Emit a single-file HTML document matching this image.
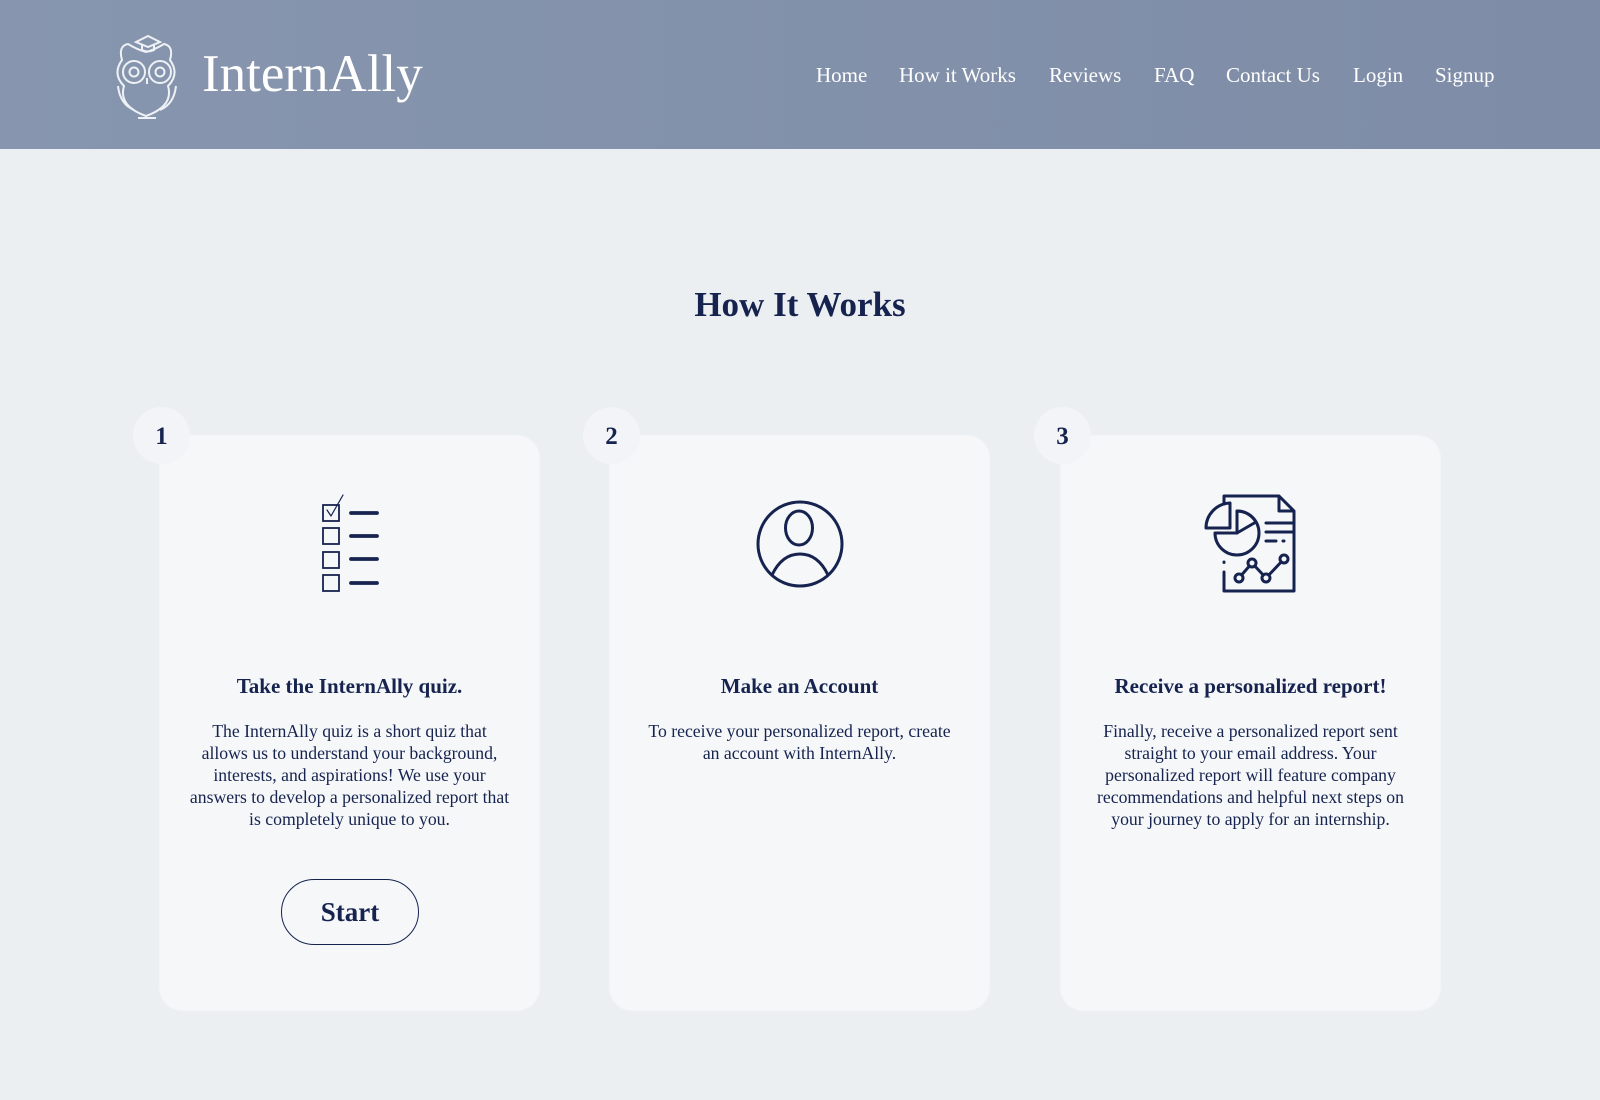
<!DOCTYPE html>
<html><head><style>
body{margin:0;width:1600px;height:1100px;background:#eceff2;font-family:"Liberation Serif",serif;color:#16234f;overflow:hidden;position:relative}
.hdr{position:absolute;left:0;top:0;width:1600px;height:149px;background:linear-gradient(90deg,#8796ae,#7e8ca7)}
.logo{position:absolute;left:202px;top:44px;font-size:53px;color:#fff}
.nav{position:absolute;top:63px;font-size:21px;color:#fff}
h1{position:absolute;left:0;width:1600px;top:285px;margin:0;text-align:center;font-size:35px;font-weight:bold}
.card{position:absolute;top:436px;height:574px;width:379px;background:#f5f7f9;border-radius:22px;box-shadow:0 0 2px rgba(255,255,255,.9);text-align:center}
.num{position:absolute;top:407px;width:57px;height:57px;border-radius:50%;background:#f2f4f7;font-size:25px;font-weight:bold;line-height:59px;text-align:center}
.card h3{position:absolute;left:0;right:0;top:238px;margin:0;font-size:21px}
.card p{position:absolute;left:29px;right:29px;top:284px;margin:0;font-size:17.7px;line-height:22px}
.btn{position:absolute;left:121px;top:443px;width:138px;height:66px;border:1.5px solid #16234f;border-radius:33px;font-size:27px;font-weight:bold;line-height:64px;box-sizing:border-box}
svg.ic{position:absolute;left:0;top:0}
</style></head><body>
<div class="hdr"></div>
<svg style="position:absolute;left:110px;top:30px" width="74" height="92" viewBox="0 0 74 92" fill="none" stroke="#eef1f5" stroke-width="2">
<path d="M26 12 L38 6 L50 12 L38 17 Z M32 14 v6 q6 3 12 0 v-6"/>
<path d="M12 30 q-4 -14 6 -16 q10 6 18 8 q8 -2 18 -8 q10 2 6 16 q10 14 -2 26 q6 20 -22 30 q-28 -10 -22 -30 q-12 -12 -2 -26z"/>
<circle cx="24" cy="42" r="11"/><circle cx="50" cy="42" r="11"/>
<circle cx="24" cy="42" r="4.5"/><circle cx="50" cy="42" r="4.5"/>
<path d="M37 48 l0 6 M28 88 h18 M8 56 q2 18 16 24 M66 56 q-2 18 -16 24"/>
</svg>
<div class="logo">InternAlly</div>
<div class="nav" style="left:816px">Home</div>
<div class="nav" style="left:899px">How it Works</div>
<div class="nav" style="left:1049px">Reviews</div>
<div class="nav" style="left:1154px">FAQ</div>
<div class="nav" style="left:1226px">Contact Us</div>
<div class="nav" style="left:1353px">Login</div>
<div class="nav" style="left:1435px">Signup</div>
<h1>How It Works</h1>

<div class="card" style="left:160px">
<h3>Take the InternAlly quiz.</h3>
<p>The InternAlly quiz is a short quiz that allows us to understand your background, interests, and aspirations! We use your answers to develop a personalized report that is completely unique to you.</p>
<div class="btn">Start</div>
</div>
<div class="num" style="left:133px">1</div>

<div class="card" style="left:610px">
<h3>Make an Account</h3>
<p>To receive your personalized report, create an account with InternAlly.</p>
</div>
<div class="num" style="left:583px">2</div>

<div class="card" style="left:1061px">
<h3>Receive a personalized report!</h3>
<p>Finally, receive a personalized report sent straight to your email address. Your personalized report will feature company recommendations and helpful next steps on your journey to apply for an internship.</p>
</div>
<div class="num" style="left:1034px">3</div>

<svg class="ic" width="1600" height="1100" fill="none" stroke="#16234f" stroke-linecap="round" stroke-linejoin="round">
<g stroke-width="1.8" stroke-linecap="butt" stroke-linejoin="miter"><rect x="323" y="505" width="16" height="16"/><rect x="323" y="528" width="16" height="16"/><rect x="323" y="552" width="16" height="16"/><rect x="323" y="575" width="16" height="16"/></g>
<path d="M327 510 l4 6 l12 -21" stroke-width="1.2"/>
<g stroke-width="3.8"><path d="M351 513 h26 M351 536 h26 M351 559 h26 M351 583 h26"/></g>
<circle cx="800" cy="544" r="42" stroke-width="3"/>
<ellipse cx="799" cy="528" rx="13.5" ry="17" stroke-width="3"/>
<path d="M772 575 q10 -21 28 -21 q18 0 28 21" stroke-width="3"/>
<g stroke-width="3" transform="translate(2,0)">
<path d="M1222 504 v-8 h55 l15 15 v80 h-70 v-19 M1277 496 v15 h15"/>
<path d="M1228 503 a25 25 0 0 0 -24 25 h24z"/>
<path d="M1235 511 a22 22 0 1 1 -22 22 h22z"/>
<path d="M1235 511 a22 22 0 0 1 19 11 l-19 11"/>
<path d="M1264 523 h26 M1264 532 h26 M1264 541 h10 M1281 541 h1"/>
<path d="M1222 562 v0.5 M1237 578 l13 -15 l14 15 l18 -19"/>
<circle cx="1237" cy="578" r="4" fill="#f5f7f9"/><circle cx="1250" cy="563" r="4" fill="#f5f7f9"/><circle cx="1264" cy="578" r="4" fill="#f5f7f9"/><circle cx="1282" cy="559" r="4" fill="#f5f7f9"/>
</g>
</svg>
</body></html>
